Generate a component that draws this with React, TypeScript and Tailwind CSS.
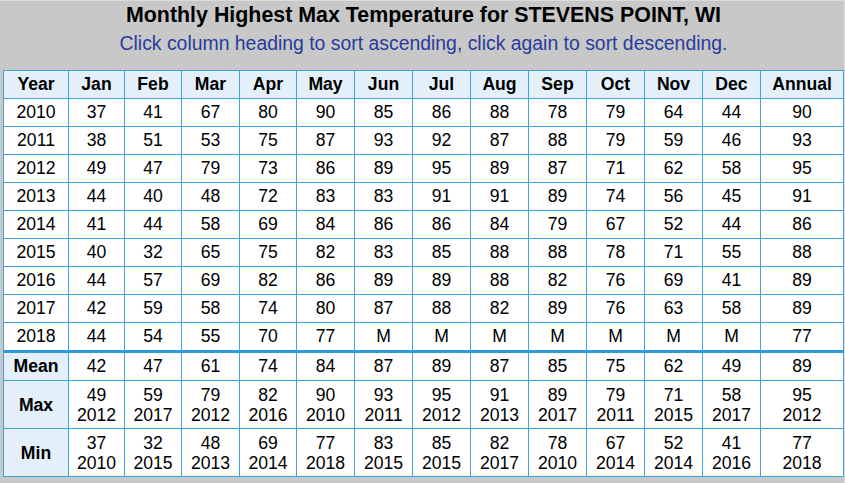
import React from "react";

const months = ["Jan","Feb","Mar","Apr","May","Jun","Jul","Aug","Sep","Oct","Nov","Dec"];
const rows: [string, string[]][] = [
  ["2010", "37 41 67 80 90 85 86 88 78 79 64 44 90".split(" ")],
  ["2011", "38 51 53 75 87 93 92 87 88 79 59 46 93".split(" ")],
  ["2012", "49 47 79 73 86 89 95 89 87 71 62 58 95".split(" ")],
  ["2013", "44 40 48 72 83 83 91 91 89 74 56 45 91".split(" ")],
  ["2014", "41 44 58 69 84 86 86 84 79 67 52 44 86".split(" ")],
  ["2015", "40 32 65 75 82 83 85 88 88 78 71 55 88".split(" ")],
  ["2016", "44 57 69 82 86 89 89 88 82 76 69 41 89".split(" ")],
  ["2017", "42 59 58 74 80 87 88 82 89 76 63 58 89".split(" ")],
  ["2018", "44 54 55 70 77 M M M M M M M 77".split(" ")],
];
const mean = "42 47 61 74 84 87 89 87 85 75 62 49 89".split(" ");
const maxV = "49 59 79 82 90 93 95 91 89 79 71 58 95".split(" ");
const maxY = "2012 2017 2012 2016 2010 2011 2012 2013 2017 2011 2015 2017 2012".split(" ");
const minV = "37 32 48 69 77 83 85 82 78 67 52 41 77".split(" ");
const minY = "2010 2015 2013 2014 2018 2015 2015 2017 2010 2014 2014 2016 2018".split(" ");

const widths = ["w-[65px]","w-[56px]","w-[57px]","w-[58px]","w-[57px]","w-[58px]","w-[58px]","w-[58px]","w-[58px]","w-[58px]","w-[58px]","w-[58px]","w-[58px]","w-[83px]"];

const base = "border border-[#3ea3df] text-center align-middle px-0 leading-[20px] text-[17.6px] text-black";
const cell = base + " pt-[2.5px] pb-[4.5px]";
const cell2 = base + " py-[3.5px]";
const head = base + " pt-[2.5px] pb-[4.5px] font-bold bg-[#e3f0fa]";
const head2 = base + " py-[3.5px] font-bold bg-[#e3f0fa]";

export default function App() {
  return (
    <div className="flex w-[845px] h-[483px] bg-[#c8c8c8] overflow-hidden" style={{ fontFamily: '"Liberation Sans", Arial, sans-serif' }}>
      <div className="flex-1 flex flex-col border-t border-[#dcdcdc]">
        <div className="pt-[2px] pl-[3px] text-center text-[21.4px] leading-[24px] font-bold text-black">
          Monthly Highest Max Temperature for STEVENS POINT, WI
        </div>
        <div className="pt-[4.5px] pl-[3px] text-center text-[19.4px] leading-[22px] text-[#2a3b9c]">
          Click column heading to sort ascending, click again to sort descending.
        </div>
        <div className="pt-[16.5px] pl-[3px]">
          <table className="table-fixed border-collapse bg-white w-[840px]">
            <colgroup>
              {widths.map((w, i) => (
                <col key={i} className={w} />
              ))}
            </colgroup>
            <thead>
              <tr>
                <th className={head}>Year</th>
                {months.map((m) => (
                  <th key={m} className={head}>{m}</th>
                ))}
                <th className={head}>Annual</th>
              </tr>
            </thead>
            <tbody>
              {rows.map(([y, vals]) => (
                <tr key={y}>
                  <td className={cell}>{y}</td>
                  {vals.map((v, i) => (
                    <td key={i} className={cell}>{v}</td>
                  ))}
                </tr>
              ))}
              <tr>
                <td className={head + " border-t-[3px] border-t-[#3399dd]"}>Mean</td>
                {mean.map((v, i) => (
                  <td key={i} className={cell + " border-t-[3px] border-t-[#3399dd]"}>{v}</td>
                ))}
              </tr>
              <tr>
                <td className={head2}>Max</td>
                {maxV.map((v, i) => (
                  <td key={i} className={cell2}>
                    {v}
                    <br />
                    {maxY[i]}
                  </td>
                ))}
              </tr>
              <tr>
                <td className={head2}>Min</td>
                {minV.map((v, i) => (
                  <td key={i} className={cell2}>
                    {v}
                    <br />
                    {minY[i]}
                  </td>
                ))}
              </tr>
            </tbody>
          </table>
        </div>
      </div>
      <div className="w-[2px] bg-[#dcdcdc]" />
    </div>
  );
}
